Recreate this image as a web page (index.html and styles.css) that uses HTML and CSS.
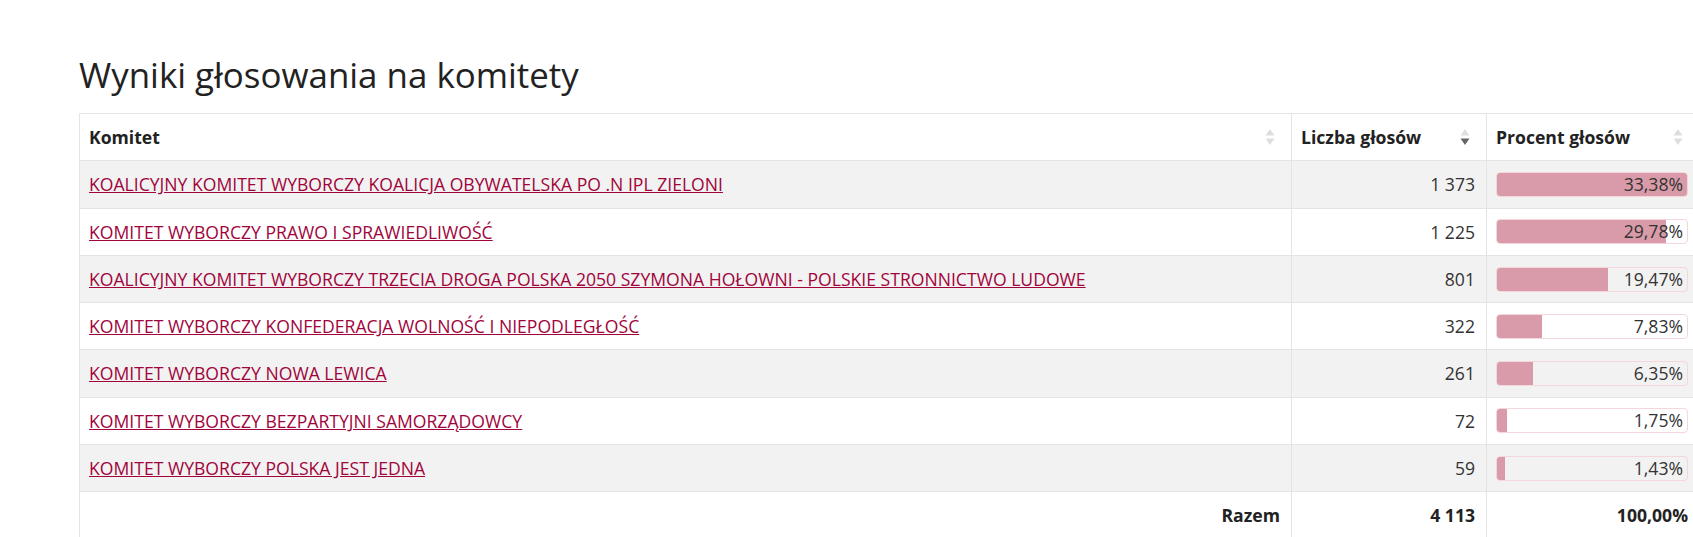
FILE: index.html
```html
<!DOCTYPE html>
<html lang="pl">
<head>
<meta charset="utf-8">
<title>Wyniki głosowania na komitety</title>
<link rel="stylesheet" href="styles.css">
</head>
<body>
<main class="page">
  <h1 class="title">Wyniki głosowania na komitety</h1>
  <table class="results">
    <colgroup>
      <col class="c-name">
      <col class="c-votes">
      <col class="c-pct">
    </colgroup>
    <thead>
      <tr>
        <th><div class="th-inner"><span>Komitet</span><span class="sort"><svg width="10" height="16" viewBox="0 0 10 16"><path d="M5 0 L9.5 6.5 H0.5 Z" fill="#dedede"/><path d="M5 16 L9.5 9.5 H0.5 Z" fill="#dedede"/></svg></span></div></th>
        <th><div class="th-inner"><span>Liczba głosów</span><span class="sort"><svg width="10" height="16" viewBox="0 0 10 16"><path d="M5 0 L9.5 6.5 H0.5 Z" fill="#dedede"/><path d="M5 16 L9.5 9.5 H0.5 Z" fill="#666"/></svg></span></div></th>
        <th><div class="th-inner"><span>Procent głosów</span><span class="sort"><svg width="10" height="16" viewBox="0 0 10 16"><path d="M5 0 L9.5 6.5 H0.5 Z" fill="#dedede"/><path d="M5 16 L9.5 9.5 H0.5 Z" fill="#dedede"/></svg></span></div></th>
      </tr>
    </thead>
    <tbody>
      <tr>
        <td><a href="#">KOALICYJNY KOMITET WYBORCZY KOALICJA OBYWATELSKA PO .N IPL ZIELONI</a></td>
        <td class="num">1 373</td>
        <td><div class="bar"><div class="fill" style="width:100%"></div><span class="pct">33,38%</span></div></td>
      </tr>
      <tr>
        <td><a href="#">KOMITET WYBORCZY PRAWO I SPRAWIEDLIWOŚĆ</a></td>
        <td class="num">1 225</td>
        <td><div class="bar"><div class="fill" style="width:89.21%"></div><span class="pct">29,78%</span></div></td>
      </tr>
      <tr>
        <td><a href="#">KOALICYJNY KOMITET WYBORCZY TRZECIA DROGA POLSKA 2050 SZYMONA HOŁOWNI - POLSKIE STRONNICTWO LUDOWE</a></td>
        <td class="num">801</td>
        <td><div class="bar"><div class="fill" style="width:58.33%"></div><span class="pct">19,47%</span></div></td>
      </tr>
      <tr>
        <td><a href="#">KOMITET WYBORCZY KONFEDERACJA WOLNOŚĆ I NIEPODLEGŁOŚĆ</a></td>
        <td class="num">322</td>
        <td><div class="bar"><div class="fill" style="width:23.46%"></div><span class="pct">7,83%</span></div></td>
      </tr>
      <tr>
        <td><a href="#">KOMITET WYBORCZY NOWA LEWICA</a></td>
        <td class="num">261</td>
        <td><div class="bar"><div class="fill" style="width:19.02%"></div><span class="pct">6,35%</span></div></td>
      </tr>
      <tr>
        <td><a href="#">KOMITET WYBORCZY BEZPARTYJNI SAMORZĄDOWCY</a></td>
        <td class="num">72</td>
        <td><div class="bar"><div class="fill" style="width:5.24%"></div><span class="pct">1,75%</span></div></td>
      </tr>
      <tr>
        <td><a href="#">KOMITET WYBORCZY POLSKA JEST JEDNA</a></td>
        <td class="num">59</td>
        <td><div class="bar"><div class="fill" style="width:4.28%"></div><span class="pct">1,43%</span></div></td>
      </tr>
    </tbody>
    <tfoot>
      <tr>
        <td class="num">Razem</td>
        <td class="num">4 113</td>
        <td class="num">100,00%</td>
      </tr>
    </tfoot>
  </table>
</main>
</body>
</html>
```

FILE: styles.css
```css
html, body {
  margin: 0;
  padding: 0;
  overflow-x: hidden;
  background: #fff;
}

body {
  font-family: "Open Sans", "Liberation Sans", sans-serif;
  color: #333;
}

.page {
  padding: 50px 0 0 79px;
  width: 1620px;
}

.title {
  margin: 0 0 14px;
  font-size: 34.9px;
  font-weight: 400;
  line-height: 49px;
  color: #222;
}

.results {
  width: 1620px;
  table-layout: fixed;
  border-collapse: collapse;
  font-size: 17.6px;
}

.c-name { width: 1212px; }
.c-votes { width: 195px; }
.c-pct { width: 213px; }

.results th,
.results td {
  border: 1px solid #e4e4e4;
  padding: 10px 11px 10px 9px;
  line-height: 26.3px;
  vertical-align: middle;
}

.results th {
  text-align: left;
  font-weight: 700;
  color: #222;
}

.th-inner {
  display: flex;
  align-items: center;
  justify-content: space-between;
}

.sort {
  display: flex;
  margin-right: 5px;
}

.results tbody tr:nth-child(odd) td {
  background: #f2f2f2;
}

.results a {
  color: #a1043b;
  text-decoration: underline;
}

.num {
  text-align: right;
}

.results tfoot td {
  font-weight: 700;
  color: #222;
}

.bar {
  position: relative;
  height: 25px;
  border: 1px solid #f4d6dd;
  border-radius: 4px;
  box-sizing: border-box;
  overflow: hidden;
}

.fill {
  height: 100%;
  background: #d99ba9;
}

.pct {
  position: absolute;
  right: 4px;
  top: 0;
  line-height: 23px;
  color: #333;
}
```
